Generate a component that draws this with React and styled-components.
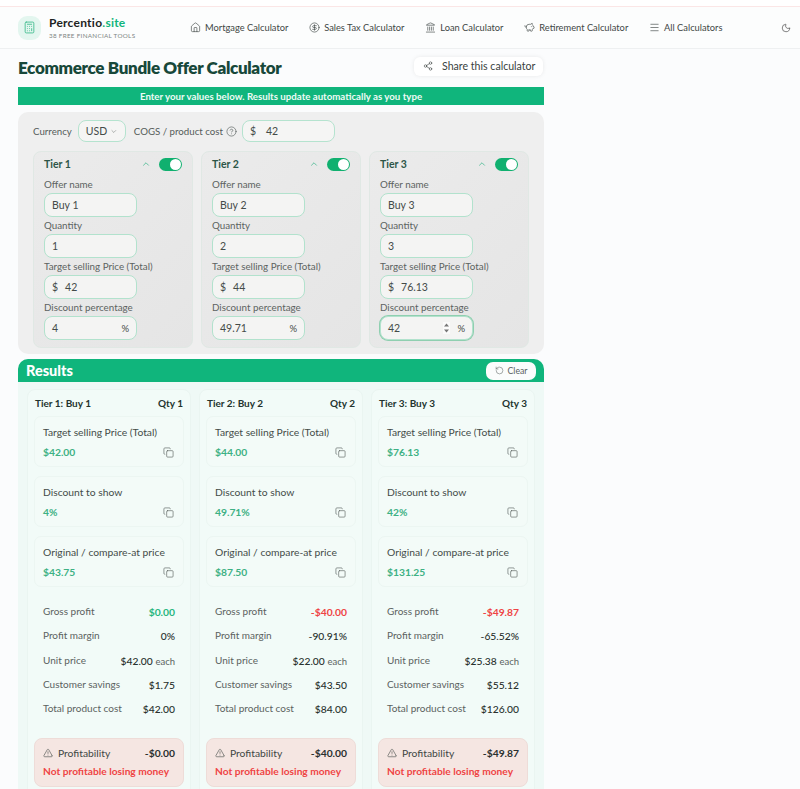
import styled, { createGlobalStyle } from 'styled-components'
import {
  Calculator, House, CircleDollarSign, Landmark, PiggyBank, Menu, Moon, Share2,
  ChevronUp, ChevronDown, CircleHelp, Copy, RotateCcw, TriangleAlert,
} from 'lucide-react'

const Global = createGlobalStyle`
  html, body { margin: 0; padding: 0; height: 789px; overflow: hidden; background: #fbfcfd; }
  body { font-family: "Lato", "Noto Sans", sans-serif; color: #333b38; }
  * { box-sizing: border-box; }
`

const TopStrip = styled.div`
  height: 7px;
  background: #fff;
  border-bottom: 1px solid #fbe6e6;
`

const Header = styled.header`
  height: 42px;
  display: flex;
  align-items: center;
  padding: 0 9px 0 18px;
  background: #fcfdfd;
  border-bottom: 1px solid #eef0f1;
`

const LogoBox = styled.div`
  width: 23px;
  height: 24px;
  border-radius: 9px;
  background: #e3f6ef;
  color: #3dbb8c;
  display: flex;
  align-items: center;
  justify-content: center;
  margin-right: 8px;
`

const Brand = styled.div`
  width: 141px;
  display: flex;
  flex-direction: column;
  gap: 2px;
`

const BrandName = styled.div`
  font-size: 12px;
  font-weight: 700;
  color: #1d2422;
  line-height: 14px;
  letter-spacing: 0.25px;
  span { color: #10b57c; }
`

const BrandSub = styled.div`
  font-size: 6.3px;
  color: #7d8583;
  letter-spacing: 0.3px;
  line-height: 8px;
`

const Nav = styled.nav`
  display: flex;
  align-items: center;
  gap: 20.8px;
  flex: 1;
`

const NavItem = styled.a`
  display: flex;
  align-items: center;
  gap: 4px;
  font-size: 9.3px;
  color: #3f4745;
  white-space: nowrap;
`

const Main = styled.main`
  width: 526px;
  margin-left: 18px;
`

const TitleRow = styled.div`
  height: 38px;
  display: flex;
  align-items: center;
  justify-content: space-between;
  padding: 0 1px 1px 0;
`

const Title = styled.h1`
  margin: 0;
  font-size: 17px;
  font-weight: 800;
  color: #17483a;
  letter-spacing: -0.33px;
`

const ShareButton = styled.button`
  width: 129px;
  height: 19px;
  margin-bottom: 3px;
  border: 0;
  border-radius: 6px;
  background: #fff;
  box-shadow: 0 0 4px rgba(0, 0, 0, 0.08);
  display: flex;
  align-items: center;
  gap: 9px;
  padding: 0 0 0 9px;
  font: inherit;
  font-size: 10.6px;
  color: #3a4240;
`

const Banner = styled.div`
  height: 18px;
  background: #10b57c;
  color: #eefbf6;
  font-size: 9.7px;
  font-weight: 700;
  text-align: center;
  line-height: 18px;
`

const Panel = styled.section`
  margin-top: 7px;
  height: 242px;
  background: #efefef;
  border-radius: 10px;
  padding: 8px 15px 0;
`

const CurrencyRow = styled.div`
  height: 22px;
  display: flex;
  align-items: center;
  font-size: 9.7px;
  color: #555c5a;
`

const SmallField = styled.div`
  height: 22px;
  width: ${(p) => p.$w}px;
  margin: 0 ${(p) => p.$mr || 0}px 0 ${(p) => p.$ml || 0}px;
  border: 1px solid #b5e3cf;
  border-radius: 8px;
  background: #f5f5f4;
  display: flex;
  align-items: center;
  gap: 3px;
  padding: 0 7px;
  font-size: 10.5px;
  color: #444b49;
`

const HelpIcon = styled(CircleHelp)`
  margin: 0 5px 0 3px;
`

const Tiers = styled.div`
  display: grid;
  grid-template-columns: repeat(3, 160px);
  gap: 8px;
  margin-top: 9px;
`

const TierCard = styled.div`
  height: 197px;
  background: linear-gradient(135deg, #ebebeb, #e5e5e5);
  border: 1px solid #e0e8e4;
  border-radius: 8px;
  padding: 6px 10px 0;
`

const TierHead = styled.div`
  height: 12px;
  display: flex;
  align-items: center;
  margin-bottom: 7px;
`

const TierName = styled.div`
  flex: 1;
  font-size: 10.5px;
  font-weight: 700;
  color: #2c5547;
`

const Toggle = styled.div`
  position: relative;
  width: 23px;
  height: 13px;
  margin-left: 8px;
  border-radius: 7px;
  background: #10b06f;
  &::after {
    content: '';
    position: absolute;
    right: 1px;
    top: 1px;
    width: 11px;
    height: 11px;
    border-radius: 50%;
    background: #fff;
  }
`

const FieldLabel = styled.div`
  height: 16px;
  font-size: 9.8px;
  line-height: 14px;
  color: #5c6361;
  white-space: nowrap;
`

const FieldBox = styled.div`
  width: 93px;
  height: 24px;
  margin-bottom: 1px;
  border: 1px solid #b2e2cd;
  border-radius: 8px;
  background: #f4f4f3;
  display: flex;
  align-items: center;
  padding: 0 7px;
  font-size: 10.5px;
  color: #444b49;
  box-shadow: ${(p) => (p.$focus ? '0 0 0 1px #8fcfb0' : 'none')};
`

const Prefix = styled.span`
  margin-right: 7px;
`

const Suffix = styled.span`
  margin-left: ${(p) => (p.$afterStepper ? 0 : 'auto')};
  font-size: 9.5px;
`

const Stepper = styled.span`
  margin-left: auto;
  margin-right: 7px;
  width: 7px;
  height: 12px;
  background: #fbfbfb;
  display: flex;
  color: #777;
`

const ResultsBar = styled.div`
  margin-top: 5px;
  height: 23px;
  background: #10b57c;
  border-radius: 10px 10px 0 0;
  display: flex;
  align-items: center;
  justify-content: space-between;
  padding: 0 8px;
`

const ResultsTitle = styled.h2`
  margin: 0;
  font-size: 14.5px;
  font-weight: 900;
  color: #fff;
`

const ClearButton = styled.button`
  width: 50px;
  height: 18px;
  border: 0;
  border-radius: 7px;
  background: #fbfcfc;
  display: flex;
  align-items: center;
  justify-content: center;
  gap: 4px;
  padding: 0;
  font: inherit;
  font-size: 8.7px;
  color: #59605e;
`

const ResultsBody = styled.section`
  height: 410px;
  background: #eff9f6;
  display: grid;
  grid-template-columns: repeat(3, 164px);
  gap: 8px;
  padding: 7px 9px 0;
`

const ResultCol = styled.div`
  height: 420px;
  background: #f2fbf8;
  border: 1px solid #eaf5f1;
  border-radius: 8px;
  padding: 0 6px;
`

const ColHead = styled.div`
  height: 26px;
  display: flex;
  align-items: center;
  justify-content: space-between;
  padding: 0 1px 1px;
  font-size: 10px;
  font-weight: 700;
  color: #23342e;
`

const CopyCard = styled.div`
  height: 51px;
  margin-bottom: 9px;
  padding: 8px 8px 0;
  background: #f3fbf8;
  border: 1px solid #ecf6f2;
  border-radius: 7px;
`

const CopyLabel = styled.div`
  font-size: 10.3px;
  line-height: 14px;
  color: #444c49;
  white-space: nowrap;
`

const CopyValue = styled.div`
  margin-top: 6px;
  display: flex;
  align-items: center;
  justify-content: space-between;
  padding-right: 1px;
  font-size: 10.3px;
  font-weight: 700;
  color: #3eb184;
  line-height: 14px;
`

const Stats = styled.div`
  padding: 8px 9px 0;
  height: 142px;
`

const StatRow = styled.div`
  height: 24.3px;
  display: flex;
  justify-content: space-between;
  font-size: 10px;
  line-height: 14px;
  color: #5b6260;
  white-space: nowrap;
`

const StatValue = styled.span`
  margin-top: 1px;
  font-size: 10.3px;
  font-weight: ${(p) => (p.$tone ? 700 : 500)};
  color: ${(p) => (p.$tone === 'good' ? '#28b67e' : p.$tone === 'bad' ? '#ef4444' : '#28302d')};
  small {
    font-size: 9.5px;
    font-weight: 400;
    color: #5b6260;
  }
`

const ProfitBox = styled.div`
  height: 49px;
  background: #f5e6e2;
  border: 1px solid #eedcd8;
  border-radius: 8px;
  padding: 7px 8px 0;
`

const ProfitTop = styled.div`
  display: flex;
  align-items: center;
  gap: 5px;
  font-size: 10.3px;
  line-height: 14px;
  color: #3f4644;
  b {
    margin-left: auto;
    font-weight: 700;
    color: #2a302e;
  }
`

const ProfitNote = styled.div`
  margin-top: 4px;
  font-size: 10.2px;
  font-weight: 700;
  line-height: 14px;
  color: #ef4444;
  white-space: nowrap;
`

const navLinks = [
  { icon: House, label: 'Mortgage Calculator' },
  { icon: CircleDollarSign, label: 'Sales Tax Calculator' },
  { icon: Landmark, label: 'Loan Calculator' },
  { icon: PiggyBank, label: 'Retirement Calculator' },
  { icon: Menu, label: 'All Calculators' },
]

const tiers = [
  { n: 1, name: 'Buy 1', qty: '1', price: '42', disc: '4' },
  { n: 2, name: 'Buy 2', qty: '2', price: '44', disc: '49.71' },
  { n: 3, name: 'Buy 3', qty: '3', price: '76.13', disc: '42', focus: true },
]

const results = [
  {
    n: 1, name: 'Buy 1', qty: 1, target: '$42.00', discount: '4%', original: '$43.75',
    profit: '$0.00', tone: 'good', margin: '0%', unit: '$42.00', savings: '$1.75', cost: '$42.00', loss: '-$0.00',
  },
  {
    n: 2, name: 'Buy 2', qty: 2, target: '$44.00', discount: '49.71%', original: '$87.50',
    profit: '-$40.00', tone: 'bad', margin: '-90.91%', unit: '$22.00', savings: '$43.50', cost: '$84.00', loss: '-$40.00',
  },
  {
    n: 3, name: 'Buy 3', qty: 3, target: '$76.13', discount: '42%', original: '$131.25',
    profit: '-$49.87', tone: 'bad', margin: '-65.52%', unit: '$25.38', savings: '$55.12', cost: '$126.00', loss: '-$49.87',
  },
]

function ResultCopy({ label, value }) {
  return (
    <CopyCard>
      <CopyLabel>{label}</CopyLabel>
      <CopyValue>
        {value}
        <Copy size={11} strokeWidth={1.4} color="#59615e" />
      </CopyValue>
    </CopyCard>
  )
}

export default function App() {
  return (
    <>
      <Global />
      <TopStrip />
      <Header>
        <LogoBox>
          <Calculator size={13} strokeWidth={1.6} />
        </LogoBox>
        <Brand>
          <BrandName>Percentio<span>.site</span></BrandName>
          <BrandSub>38 FREE FINANCIAL TOOLS</BrandSub>
        </Brand>
        <Nav>
          {navLinks.map(({ icon: Icon, label }) => (
            <NavItem key={label}>
              <Icon size={11} strokeWidth={1.4} />
              {label}
            </NavItem>
          ))}
        </Nav>
        <Moon size={10} strokeWidth={1.6} color="#444" />
      </Header>
      <Main>
        <TitleRow>
          <Title>Ecommerce Bundle Offer Calculator</Title>
          <ShareButton>
            <Share2 size={10} strokeWidth={1.4} />
            Share this calculator
          </ShareButton>
        </TitleRow>
        <Banner>Enter your values below. Results update automatically as you type</Banner>
        <Panel>
          <CurrencyRow>
            Currency
            <SmallField $w={48} $ml={6} $mr={8}>USD <ChevronDown size={9} strokeWidth={1.3} /></SmallField>
            COGS / product cost
            <HelpIcon size={11} strokeWidth={1.4} />
            <SmallField $w={93}><Prefix>$</Prefix>42</SmallField>
          </CurrencyRow>
          <Tiers>
            {tiers.map((t) => (
              <TierCard key={t.n}>
                <TierHead>
                  <TierName>Tier {t.n}</TierName>
                  <ChevronUp size={10} strokeWidth={1.8} color="#3bb58a" />
                  <Toggle />
                </TierHead>
                <FieldLabel>Offer name</FieldLabel>
                <FieldBox>{t.name}</FieldBox>
                <FieldLabel>Quantity</FieldLabel>
                <FieldBox>{t.qty}</FieldBox>
                <FieldLabel>Target selling Price (Total)</FieldLabel>
                <FieldBox><Prefix>$</Prefix>{t.price}</FieldBox>
                <FieldLabel>Discount percentage</FieldLabel>
                <FieldBox $focus={t.focus}>
                  {t.disc}
                  {t.focus ? (
                    <Stepper>
                      <svg width="7" height="12" viewBox="0 0 7 12" fill="currentColor">
                        <path d="M3.5 1.5 6 4.5H1z" />
                        <path d="M3.5 10.5 6 7.5H1z" />
                      </svg>
                    </Stepper>
                  ) : null}
                  <Suffix $afterStepper={t.focus}>%</Suffix>
                </FieldBox>
              </TierCard>
            ))}
          </Tiers>
        </Panel>
        <ResultsBar>
          <ResultsTitle>Results</ResultsTitle>
          <ClearButton>
            <RotateCcw size={9} strokeWidth={1.4} />
            Clear
          </ClearButton>
        </ResultsBar>
        <ResultsBody>
          {results.map((r) => (
            <ResultCol key={r.n}>
              <ColHead>
                <span>Tier {r.n}: {r.name}</span>
                <span>Qty {r.qty}</span>
              </ColHead>
              <ResultCopy label="Target selling Price (Total)" value={r.target} />
              <ResultCopy label="Discount to show" value={r.discount} />
              <ResultCopy label="Original / compare-at price" value={r.original} />
              <Stats>
                <StatRow>Gross profit<StatValue $tone={r.tone}>{r.profit}</StatValue></StatRow>
                <StatRow>Profit margin<StatValue>{r.margin}</StatValue></StatRow>
                <StatRow>Unit price<StatValue>{r.unit} <small>each</small></StatValue></StatRow>
                <StatRow>Customer savings<StatValue>{r.savings}</StatValue></StatRow>
                <StatRow>Total product cost<StatValue>{r.cost}</StatValue></StatRow>
              </Stats>
              <ProfitBox>
                <ProfitTop>
                  <TriangleAlert size={10} strokeWidth={1.4} />
                  Profitability
                  <b>{r.loss}</b>
                </ProfitTop>
                <ProfitNote>Not profitable losing money</ProfitNote>
              </ProfitBox>
            </ResultCol>
          ))}
        </ResultsBody>
      </Main>
    </>
  )
}
